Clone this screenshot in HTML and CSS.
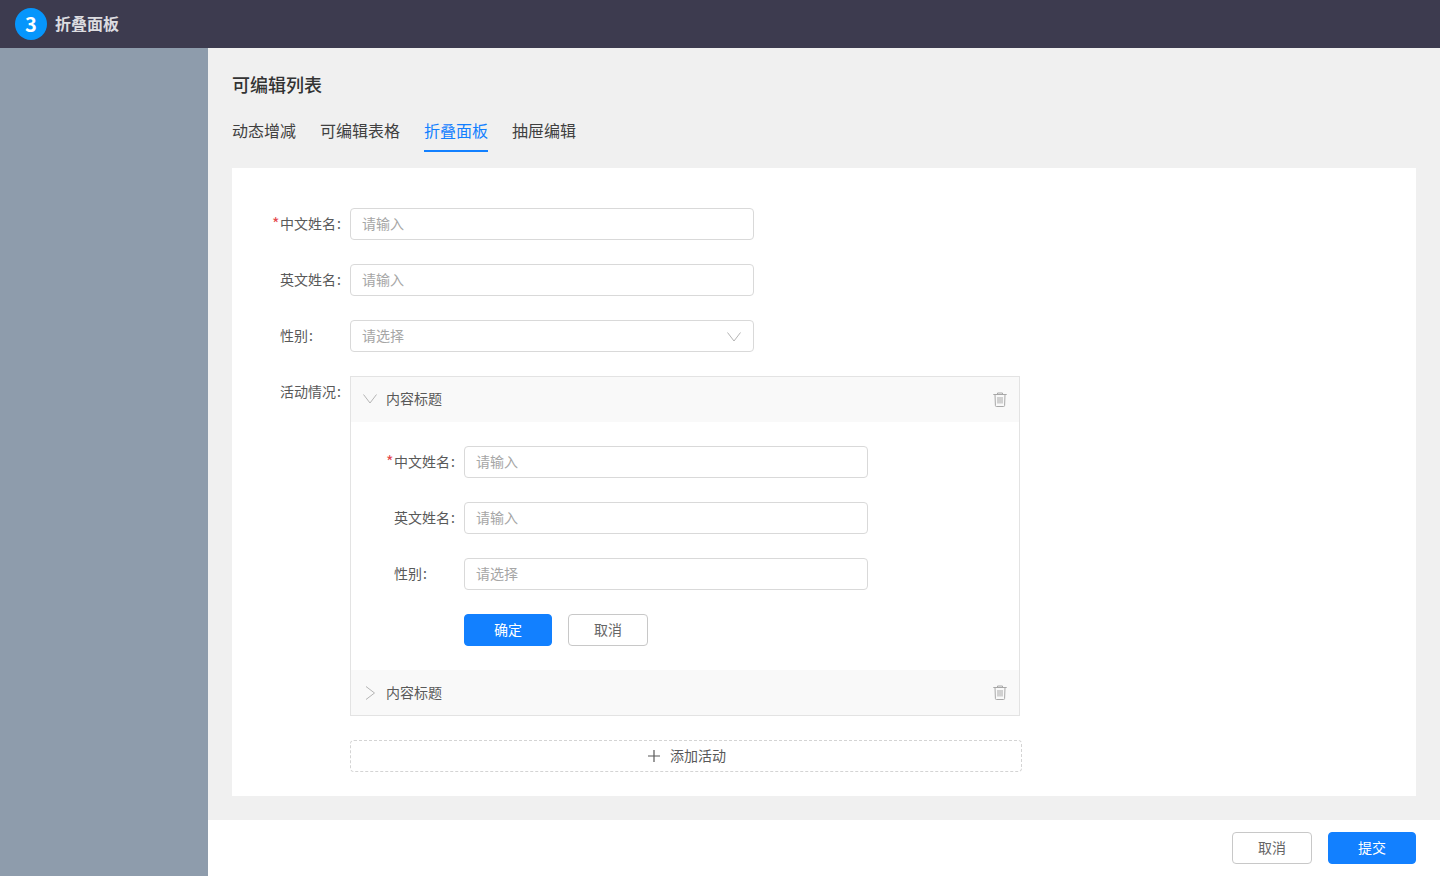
FILE: index.html
```html
<!DOCTYPE html>
<html lang="zh-CN">
<head>
    <meta charset="UTF-8">
    <meta name="viewport" content="width=device-width, initial-scale=1.0">
    <title>折叠面板</title>
    <link rel="stylesheet" href="styles.css">
</head>
<body>
    <div id="topbar">
        <span class="logo">3</span>
        <span class="app-name">折叠面板</span>
    </div>
    <div id="layout">
        <div id="sidebar"></div>
        <div id="main">
            <div id="content">
                <h1 class="page-title">可编辑列表</h1>
                <div class="tabs">
                    <div class="tab">动态增减</div>
                    <div class="tab">可编辑表格</div>
                    <div class="tab active">折叠面板</div>
                    <div class="tab">抽屉编辑</div>
                </div>
                <div class="card">
                    <div class="form-row">
                        <label class="form-label required">中文姓名<span class="colon">:</span></label>
                        <div class="input placeholder">请输入</div>
                    </div>
                    <div class="form-row">
                        <label class="form-label">英文姓名<span class="colon">:</span></label>
                        <div class="input placeholder">请输入</div>
                    </div>
                    <div class="form-row">
                        <label class="form-label">性别<span class="colon">:</span></label>
                        <div class="input placeholder select">
                            <span class="select-text">请选择</span>
                            <svg class="select-arrow" width="14" height="10" viewBox="0 0 14 10"><path d="M.5.500 7 9 13.500.5" fill="none" stroke="#b4b4b4"/></svg>
                        </div>
                    </div>
                    <div class="form-row">
                        <label class="form-label">活动情况<span class="colon">:</span></label>
                        <div class="activities">
                            <div class="collapse">
                                <div class="collapse-header open">
                                    <svg class="caret" width="14" height="14" viewBox="0 0 14 14"><path d="M.5 2.500 7 11 13.500 2.500" fill="none" stroke="#b4b4b4"/></svg>
                                    <span class="collapse-title">内容标题</span>
                                    <svg class="trash" width="14" height="15" viewBox="0 0 14 15"><path d="M.3 2.500h13.400M4.500 2.500V1h5v1.500M2 2.500l.4 11q0 1 1 1h7.200q1 0 1-1l.4-11M5 5v6.500M7 5v6.500M9 5v6.500" fill="none" stroke="#a8a8a8"/></svg>
                                </div>
                                <div class="collapse-body">
                                    <div class="form-row">
                                        <label class="form-label required">中文姓名<span class="colon">:</span></label>
                                        <div class="input placeholder">请输入</div>
                                    </div>
                                    <div class="form-row">
                                        <label class="form-label">英文姓名<span class="colon">:</span></label>
                                        <div class="input placeholder">请输入</div>
                                    </div>
                                    <div class="form-row">
                                        <label class="form-label">性别<span class="colon">:</span></label>
                                        <div class="input placeholder">请选择</div>
                                    </div>
                                    <div class="form-row form-actions">
                                        <button class="btn btn-primary btn-confirm">确定</button>
                                        <button class="btn">取消</button>
                                    </div>
                                </div>
                                <div class="collapse-header">
                                    <svg class="caret" width="14" height="14" viewBox="0 0 14 14"><path d="M3 .5 11.500 7 3 13.500" fill="none" stroke="#b4b4b4"/></svg>
                                    <span class="collapse-title">内容标题</span>
                                    <svg class="trash" width="14" height="15" viewBox="0 0 14 15"><path d="M.3 2.500h13.400M4.500 2.500V1h5v1.500M2 2.500l.4 11q0 1 1 1h7.200q1 0 1-1l.4-11M5 5v6.500M7 5v6.500M9 5v6.500" fill="none" stroke="#a8a8a8"/></svg>
                                </div>
                            </div>
                            <div class="add-row">
                                <svg width="12" height="12" viewBox="0 0 12 12"><path d="M6 0v12M0 6h12" stroke="#595959" stroke-width="1.200"/></svg>
                                <span>添加活动</span>
                            </div>
                        </div>
                    </div>
                </div>
            </div>
            <div id="footer">
                <button class="btn">取消</button>
                <button class="btn btn-primary btn-submit">提交</button>
            </div>
        </div>
    </div>
</body>
</html>
```

FILE: styles.css
```css
* {
    box-sizing: border-box;
}

body {
    margin: 0;
    height: 876px;
    overflow: hidden;
    display: flex;
    flex-direction: column;
    background-color: #f0f0f0;
    color: #595959;
    font-family: "Noto Sans CJK SC", "Noto Sans", sans-serif;
    font-size: 14px;
}

#topbar {
    height: 48px;
    flex-shrink: 0;
    display: flex;
    align-items: center;
    padding-left: 15px;
    background-color: #3d3b4f;
}

.logo {
    width: 32px;
    height: 32px;
    border-radius: 50%;
    background-color: #0696fc;
    color: #ffffff;
    font-size: 20px;
    font-weight: 700;
    line-height: 32px;
    text-align: center;
}

.app-name {
    margin-left: 8px;
    padding-bottom: 2px;
    color: #dcdce0;
    font-size: 16px;
    font-weight: 700;
}

#layout {
    flex: 1;
    display: flex;
    min-height: 0;
}

#sidebar {
    width: 208px;
    background-color: #8e9cac;
}

#main {
    flex: 1;
    display: flex;
    flex-direction: column;
}

#content {
    flex: 1;
    padding: 23px 24px 24px;
}

.page-title {
    margin: 0;
    height: 26px;
    color: #333333;
    font-size: 18px;
    font-weight: 500;
    line-height: 26px;
}

.tabs {
    display: flex;
    gap: 24px;
    margin-top: 20px;
}

.tab {
    height: 35px;
    color: #404040;
    font-size: 16px;
    line-height: 24px;
    padding-top: 1px;
}

.tab.active {
    color: #1280ff;
    border-bottom: 2px solid #1280ff;
}

.card {
    margin-top: 16px;
    height: 628px;
    padding: 40px 0 0 40px;
    background-color: #ffffff;
}

.form-row {
    display: flex;
    margin-bottom: 24px;
}

.form-label {
    position: relative;
    width: 78px;
    padding-left: 8px;
    height: 32px;
    line-height: 30px;
    color: #595959;
    white-space: nowrap;
}

.colon {
    margin-left: 1px;
}

.required::before {
    content: "*";
    position: absolute;
    left: 0;
    top: 0;
    color: #e5484d;
    font-size: 16px;
}

.input {
    width: 404px;
    height: 32px;
    padding: 0 11px;
    border: 1px solid #d9d9d9;
    border-radius: 4px;
    background-color: #ffffff;
    line-height: 28px;
}

.placeholder {
    color: #a6a6a6;
}

.select {
    display: flex;
    justify-content: space-between;
    align-items: flex-start;
    padding-right: 12px;
}

.select-arrow {
    margin-top: 11px;
}

.activities {
    width: 672px;
}

.collapse {
    width: 670px;
    height: 340px;
    border: 1px solid #e3e3e3;
}

.collapse-header {
    height: 45px;
    display: flex;
    align-items: center;
    padding: 0 12px;
    background-color: #f9f9f9;
}

.collapse-header.open {
    padding-bottom: 1px;
}

.collapse-title {
    flex: 1;
    margin-left: 9px;
    padding-bottom: 2px;
    color: #595959;
}

.collapse-body {
    height: 248px;
    padding: 24px 0 0 35px;
}

.form-actions {
    padding-left: 78px;
    gap: 16px;
    margin-bottom: 0;
}

.btn {
    width: 80px;
    height: 32px;
    padding: 0 0 2px;
    border: 1px solid #c8c8c8;
    border-radius: 4px;
    background-color: #ffffff;
    color: #666666;
    font-family: inherit;
    font-size: 14px;
}

.btn-primary {
    border-color: #1280ff;
    background-color: #1280ff;
    color: #ffffff;
}

.btn-confirm,
.btn-submit {
    width: 88px;
}

.add-row {
    height: 32px;
    margin-top: 24px;
    padding: 0 0 2px 2px;
    display: flex;
    align-items: center;
    justify-content: center;
    gap: 10px;
    border: 1px dashed #d4d4d4;
    border-radius: 4px;
    color: #595959;
}

.add-row svg {
    margin-top: 2px;
}

#footer {
    height: 56px;
    flex-shrink: 0;
    display: flex;
    align-items: center;
    justify-content: flex-end;
    gap: 16px;
    padding-right: 24px;
    background-color: #ffffff;
}
```
